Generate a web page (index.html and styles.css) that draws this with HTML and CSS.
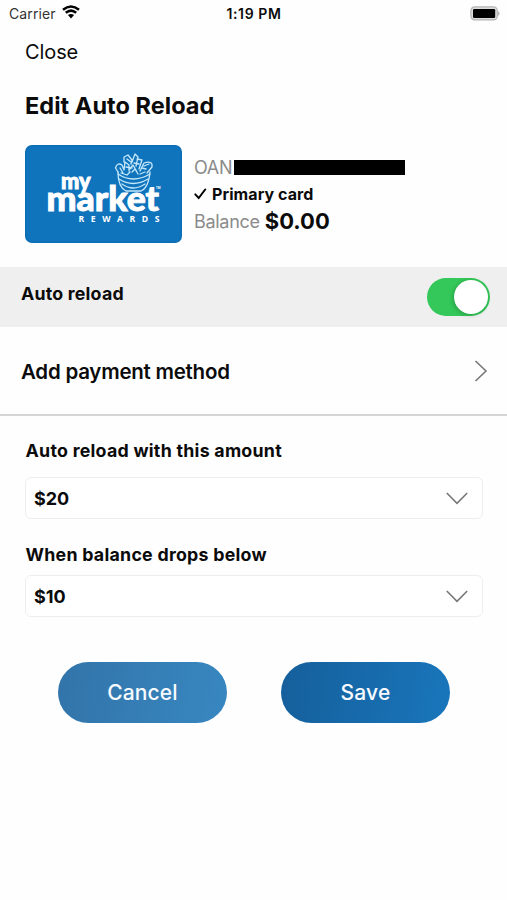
FILE: index.html
```html
<!DOCTYPE html>
<html lang="en">
<head>
<meta charset="utf-8">
<title>Edit Auto Reload</title>
<link rel="stylesheet" href="styles.css">
</head>
<body>
<header class="status">
  <div class="carrier"><span>Carrier</span>
    <svg class="wifi" viewBox="0 0 18 14" width="18" height="14"><path d="M1 4.8Q9-1.9 17 4.8M3.8 7.8Q9 3.4 14.2 7.8" fill="none" stroke="#000" stroke-width="2.5"/><path d="M5.9 10.1Q9 7.8 12.1 10.1L9 13.4Z"/></svg>
  </div>
  <time class="clock">1:19 PM</time>
  <svg class="battery" viewBox="0 0 31 15" width="31" height="15"><rect x=".9" y=".9" width="26.4" height="13" rx="3.8" fill="#ddd" stroke="#b4b4b4" stroke-width="1.2"/><rect x="3" y="3" width="22.2" height="9" rx="1.2"/><path d="M28.2 5Q31 7.4 28.2 10Z" fill="#aaa"/></svg>
</header>
<nav class="nav"><a class="close">Close</a></nav>
<h1 class="title">Edit Auto Reload</h1>
<section class="account">
  <svg class="card" viewBox="0 0 157 98" width="157" height="98">
    <rect width="157" height="98" rx="7" fill="#0a6db5"/>
    <rect x="1.5" y="1.5" width="154" height="95" rx="6" fill="#1074bd"/>
    <g fill="none" stroke="#c4e8fb" stroke-width="1.3" stroke-linecap="round" stroke-linejoin="round">
      <path d="M93 27C93 38 97 44 101 46H116C121 44 124 38 125 27"/>
      <path d="M93 29Q108 39 125 29M94 34Q108 43 123 34M97 39Q108 47 120 39"/>
      <path d="M93 27L90.5 23Q92 17 97 20L99 25L100 17L104 20L104 26M99 17L99 12L103 10L107 15L106 19M107 17L110 9L113 12L111 21M112 14L117 15L114 24M104 25L108 20L112 27M115 26L119 18Q128 15 127 22L122 28M117 23L121 24M95 23L98 28M107 27L110 24L113 29M102 14L106 17M119 21L124 19M101 22L107 23M109 18L114 19M96 28L102 30L105 27M115 29L120 27"/>
    </g>
    <g class="logo">
      <text x="36" y="43.5" font-size="22" textLength="29.5" lengthAdjust="spacingAndGlyphs">my</text>
      <text x="21.5" y="66" font-size="34" textLength="112.5" lengthAdjust="spacingAndGlyphs">market</text>
      <text class="rewards" x="53.5" y="76.6" font-size="8.6" textLength="81">REWARDS</text>
      <text class="tm" x="131" y="44" font-size="3">TM</text>
    </g>
  </svg>
  <div class="details">
    <div class="line oan"><span class="muted">OAN</span><span class="redacted"></span></div>
    <div class="line primary"><svg viewBox="0 0 13 12" width="13" height="12"><path d="M1.3 6.4L4.7 10L11.2 1.5" fill="none" stroke="#000" stroke-width="2" stroke-linecap="round"/></svg><span>Primary card</span></div>
    <div class="line balance"><span class="muted">Balance</span><strong>$0.00</strong></div>
  </div>
</section>
<section class="toggle-row"><h2>Auto reload</h2><span class="switch"><span class="knob"></span></span></section>
<section class="payment"><span>Add payment method</span>
  <svg viewBox="0 0 14 22" width="14" height="22"><path d="M1.5 1L12 11L1.5 21" fill="none" stroke="#777" stroke-width="1.6"/></svg>
</section>
<form class="form">
  <h3 class="label amount-label">Auto reload with this amount</h3>
  <div class="select"><span>$20</span><svg viewBox="0 0 22 13" width="22" height="13"><path d="M.8 1L11 11.4L21.2 1" fill="none" stroke="#777" stroke-width="1.6"/></svg></div>
  <h3 class="label below-label">When balance drops below</h3>
  <div class="select"><span>$10</span><svg viewBox="0 0 22 13" width="22" height="13"><path d="M.8 1L11 11.4L21.2 1" fill="none" stroke="#777" stroke-width="1.6"/></svg></div>
  <div class="actions"><button type="button" class="btn cancel">Cancel</button><button type="button" class="btn save">Save</button></div>
</form>
</body>
</html>
```
FILE: styles.css
```css
* { box-sizing: border-box; }
body { margin: 0; height: 900px; background: #fefefe; color: #0b0b0b; font-family: Inter, "Liberation Sans", sans-serif; white-space: nowrap; overflow: hidden; }
h1, h2, h3 { margin: 0; }
svg { display: block; flex: none; }
.status { height: 28px; display: grid; grid-template-columns: 1fr auto 1fr; align-items: center; padding: 0 6px 2px 9px; }
.carrier { display: flex; align-items: center; gap: 6px; font-size: 14px; letter-spacing: .1px; color: #333; padding-top: 1px; }
.wifi { margin-top: -3px; }
.clock { font-size: 14px; font-weight: 600; letter-spacing: .6px; padding-top: 1px; margin-right: 2px; }
.battery { justify-self: end; }
.nav { height: 48px; display: flex; align-items: center; padding-left: 25px; }
.close { font-size: 20px; letter-spacing: -.1px; }
.title { height: 69px; padding-left: 25px; font-size: 23.5px; font-weight: 700; line-height: 60px; letter-spacing: .04px; }
.account { height: 122px; display: flex; padding-left: 25px; gap: 12px; }
.logo { fill: #fff; font-family: Lato, sans-serif; font-weight: 900; stroke: #fff; stroke-width: .9; }
.rewards, .tm { stroke: none; font-family: "Open Sans", sans-serif; font-weight: 700; }
.details { padding-top: 9px; }
.line { display: flex; align-items: center; height: 27px; }
.muted { color: #8b8b8b; font-size: 18px; letter-spacing: -.3px; }
.redacted { width: 171px; height: 15px; background: #000; margin-left: 2px; }
.primary { gap: 5px; font-size: 16px; font-weight: 700; letter-spacing: .08px; padding-bottom: 2px; }
.balance { gap: 5px; padding-bottom: 1px; }
.balance strong { font-size: 22px; letter-spacing: .05px; }
.toggle-row { height: 60px; background: #efefef; display: flex; justify-content: space-between; align-items: center; padding: 0 17px 0 21px; }
.toggle-row h2 { font-size: 17.8px; font-weight: 700; letter-spacing: .2px; padding-bottom: 8px; }
.switch { width: 63px; height: 38px; border-radius: 19px; background: #34c759; display: flex; justify-content: flex-end; padding: 2px; }
.knob { width: 34px; height: 34px; border-radius: 50%; background: #fff; box-shadow: -1px 1px 4px rgba(0,0,0,.22); }
.payment { height: 89px; display: flex; align-items: center; justify-content: space-between; border-bottom: 2px solid #d5d5d5; padding: 1px 19px 0 21px; font-size: 20.5px; font-weight: 600; letter-spacing: -.24px; }
.form { padding: 0 24px 0 25px; }
.label { font-size: 17.8px; font-weight: 700; letter-spacing: .25px; line-height: 24px; padding-left: .6px; }
.amount-label { margin: 23px 0 14px; }
.below-label { margin: 24px 0 8px; }
.select { height: 42px; border: 1.5px solid #eee; border-radius: 6px; display: flex; align-items: center; justify-content: space-between; padding: 0 14px 0 8px; font-size: 18px; font-weight: 700; background: #fff; }
.actions { margin: 45px 0 0 33px; display: flex; gap: 54px; }
.btn { width: 169px; height: 61px; border: 0; border-radius: 31px; padding: 0; color: #f7fbff; font: 500 21px Inter, sans-serif; letter-spacing: .15px; }
.cancel { background: linear-gradient(100deg, #3274a9, #3887c1); }
.save { background: linear-gradient(100deg, #155f9b, #1976bb); }
```
